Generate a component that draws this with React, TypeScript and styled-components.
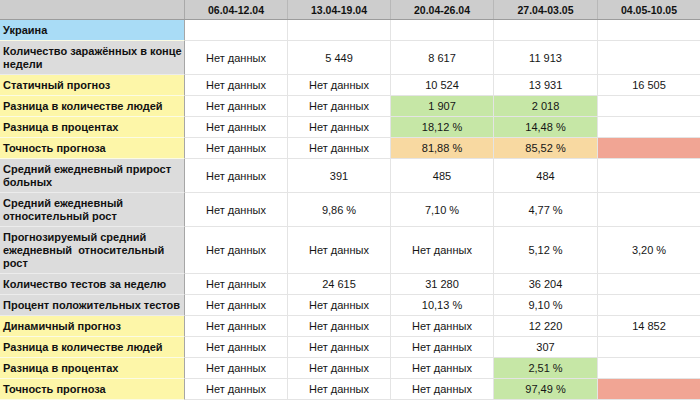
import React from "react";
import styled, { createGlobalStyle } from "styled-components";

const GlobalStyle = createGlobalStyle`
  html, body { margin: 0; padding: 0; background: #ffffff; }
  body { font-family: "Liberation Sans", Arial, Helvetica, sans-serif; color: #111; }
`;

type Tone = "blue" | "gray" | "yellow";
type Fill = "none" | "green" | "orange" | "red";

const toneColors: Record<Tone, string> = {
  blue: "#a9dcf6",
  gray: "#dcdcdc",
  yellow: "#fdf6a8",
};

const fillColors: Record<Fill, string> = {
  none: "#ffffff",
  green: "#c6e7a6",
  orange: "#f8d9a1",
  red: "#f1a594",
};

const Sheet = styled.div`
  width: 700px;
  display: flex;
  flex-direction: column;
  overflow: hidden;
`;

const Row = styled.div`
  display: grid;
  grid-template-columns: 185px 102px 103px 103px 104px 103px;
`;

const HeaderRow = styled(Row)`
  background: #cdcdcd;
  border-bottom: 1px solid #9c9c9c;
  height: 19px;
`;

const HeaderCell = styled.div`
  display: flex;
  align-items: center;
  justify-content: center;
  font-size: 10.5px;
  font-weight: 700;
  color: #111;
  border-left: 1px solid #b8b8b8;
  &:first-child { border-left: none; border-right: 1px solid #a9a9a9; }
  &:nth-child(2) { border-left: none; }
`;

const LabelCell = styled.div<{ $tone: Tone }>`
  background: ${(p) => toneColors[p.$tone]};
  border-right: 1px solid #a6a6a6;
  border-bottom: 1px solid ${(p) => (p.$tone === "gray" ? "#ececec" : "#fbfbe4")};
  padding: 4px 3px 3px 3px;
  font-size: 11px;
  line-height: 13px;
  font-weight: 700;
  color: #111;
  white-space: pre;
  display: flex;
  align-items: center;
`;

const ValueCell = styled.div<{ $fill: Fill }>`
  background: ${(p) => fillColors[p.$fill]};
  border-bottom: 1px solid #e4e4e4;
  border-left: 1px solid #e4e4e4;
  &:nth-child(2) { border-left: none; }
  display: flex;
  align-items: center;
  justify-content: center;
  font-size: 11px;
  line-height: 13px;
  color: #151515;
  padding-top: 1px;
`;

type RowData = {
  label: string[];
  tone: Tone;
  values: string[];
  fills?: Fill[];
};

const ND = "Нет данных";

const rows: RowData[] = [
  { label: ["Украина"], tone: "blue", values: ["", "", "", "", ""] },
  {
    label: ["Количество заражённых в конце", "недели"],
    tone: "gray",
    values: [ND, "5 449", "8 617", "11 913", ""],
  },
  { label: ["Статичный прогноз"], tone: "yellow", values: [ND, ND, "10 524", "13 931", "16 505"] },
  {
    label: ["Разница в количестве людей"],
    tone: "yellow",
    values: [ND, ND, "1 907", "2 018", ""],
    fills: ["none", "none", "green", "green", "none"],
  },
  {
    label: ["Разница в процентах"],
    tone: "yellow",
    values: [ND, ND, "18,12 %", "14,48 %", ""],
    fills: ["none", "none", "green", "green", "none"],
  },
  {
    label: ["Точность прогноза"],
    tone: "yellow",
    values: [ND, ND, "81,88 %", "85,52 %", ""],
    fills: ["none", "none", "orange", "orange", "red"],
  },
  {
    label: ["Средний ежедневный прирост", "больных"],
    tone: "gray",
    values: [ND, "391", "485", "484", ""],
  },
  {
    label: ["Средний ежедневный", "относительный рост"],
    tone: "gray",
    values: [ND, "9,86 %", "7,10 %", "4,77 %", ""],
  },
  {
    label: ["Прогнозируемый средний", "ежедневный  относительный", "рост"],
    tone: "gray",
    values: [ND, ND, ND, "5,12 %", "3,20 %"],
  },
  {
    label: ["Количество тестов за неделю"],
    tone: "gray",
    values: [ND, "24 615", "31 280", "36 204", ""],
  },
  {
    label: ["Процент положительных тестов"],
    tone: "gray",
    values: [ND, ND, "10,13 %", "9,10 %", ""],
  },
  { label: ["Динамичный прогноз"], tone: "yellow", values: [ND, ND, ND, "12 220", "14 852"] },
  { label: ["Разница в количестве людей"], tone: "yellow", values: [ND, ND, ND, "307", ""] },
  {
    label: ["Разница в процентах"],
    tone: "yellow",
    values: [ND, ND, ND, "2,51 %", ""],
    fills: ["none", "none", "none", "green", "none"],
  },
  {
    label: ["Точность прогноза"],
    tone: "yellow",
    values: [ND, ND, ND, "97,49 %", ""],
    fills: ["none", "none", "none", "green", "red"],
  },
];

const weeks = ["06.04-12.04", "13.04-19.04", "20.04-26.04", "27.04-03.05", "04.05-10.05"];

export default function App() {
  return (
    <>
      <GlobalStyle />
      <Sheet>
        <HeaderRow>
          <HeaderCell />
          {weeks.map((w) => (
            <HeaderCell key={w}>{w}</HeaderCell>
          ))}
        </HeaderRow>
        {rows.map((r, i) => (
          <Row key={i}>
            <LabelCell $tone={r.tone}>{r.label.join("\n")}</LabelCell>
            {r.values.map((v, j) => (
              <ValueCell key={j} $fill={r.fills ? r.fills[j] : "none"}>
                {v}
              </ValueCell>
            ))}
          </Row>
        ))}
      </Sheet>
    </>
  );
}
